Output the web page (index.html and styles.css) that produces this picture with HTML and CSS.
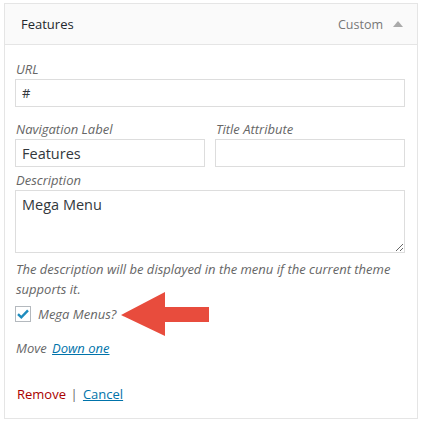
FILE: index.html
```html
<!DOCTYPE html>
<html lang="en">
<head>
    <meta charset="UTF-8">
    <meta name="viewport" content="width=device-width, initial-scale=1.0">
    <title>Menu Item</title>
    <link rel="stylesheet" href="styles.css">
</head>
<body>
    <div class="menu-item">
        <div class="item-bar">
            <span class="item-title">Features</span>
            <span class="item-controls">
                <span class="item-type">Custom</span>
                <span class="item-toggle"></span>
            </span>
        </div>
        <div class="item-settings">
            <div class="field url-field">
                <label class="field-label" for="urlInput">URL</label>
                <input class="field-input" type="text" id="urlInput" value="#">
            </div>
            <div class="field-row">
                <div class="field">
                    <label class="field-label" for="navLabel">Navigation Label</label>
                    <input class="field-input big" type="text" id="navLabel" value="Features">
                </div>
                <div class="field">
                    <label class="field-label" for="titleAttr">Title Attribute</label>
                    <input class="field-input" type="text" id="titleAttr">
                </div>
            </div>
            <div class="field desc-field">
                <label class="field-label" for="descInput">Description</label>
                <textarea class="field-input big" id="descInput">Mega Menu</textarea>
            </div>
            <p class="hint">The description will be displayed in the menu if the current theme supports it.</p>
            <div class="check-row">
                <span class="checkbox">
                    <svg width="12" height="10" viewBox="0 0 12 10"><path d="M1 5.2 L4.3 8.3 L11 1.3" fill="none" stroke="#1e8cbe" stroke-width="2.4"/></svg>
                </span>
                <span class="check-label">Mega Menus?</span>
                <svg class="pointer" width="88" height="44" viewBox="0 0 88 44"><polygon points="0,23 44,0 44,15 88,15 88,30 44,30 44,44" fill="#e84c3d"/></svg>
            </div>
            <p class="move">Move <a href="#">Down one</a></p>
            <div class="actions">
                <a class="remove" href="#">Remove</a>
                <span class="sep">|</span>
                <a class="cancel" href="#">Cancel</a>
            </div>
        </div>
    </div>
</body>
</html>
```

FILE: styles.css
```css
body{
    margin: 0;
    padding: 3px 5px 0 4px;
    background: #fff;
    font-family: "Open Sans", "Liberation Sans", sans-serif;
    font-size: 13px;
    color: #444;
}

.menu-item{
    border: 1px solid #e5e5e5;
    background: #fff;
}

.item-bar{
    display: flex;
    justify-content: space-between;
    align-items: center;
    height: 40px;
    padding: 0 14px 0 16px;
    background: #fafafa;
    border-bottom: 1px solid #e5e5e5;
}

.item-title{
    color: #23282d;
    font-size: 13px;
}

.item-controls{
    display: flex;
    align-items: center;
}

.item-type{
    color: #777;
    font-size: 12.5px;
}

.item-toggle{
    width: 0;
    height: 0;
    margin-left: 10px;
    border-left: 5px solid transparent;
    border-right: 5px solid transparent;
    border-bottom: 6px solid #aaa;
}

.item-settings{
    padding: 14px 12px 14px 10px;
}

.field{
    display: flex;
    flex-direction: column;
    min-width: 0;
}

.field-label{
    font-style: italic;
    color: #666;
    line-height: 20px;
    padding-left: 1px;
}

.field-input{
    box-sizing: border-box;
    width: 100%;
    height: 28px;
    border: 1px solid #ddd;
    padding: 0 6px;
    font-family: "Open Sans", "Liberation Sans", sans-serif;
    font-size: 13px;
    color: #32373c;
    outline: none;
}

.field-input.big{
    font-size: 14.5px;
}

.field-row{
    display: grid;
    grid-template-columns: minmax(0, 1fr) minmax(0, 1fr);
    gap: 10px;
    margin-top: 12px;
}

.desc-field{
    margin-top: 3px;
}

.desc-field textarea{
    height: 63px;
    padding: 4px 6px;
    resize: vertical;
}

.hint{
    margin: 6px 0 0;
    font-style: italic;
    color: #666;
    line-height: 20px;
    padding-left: 1px;
}

.check-row{
    display: flex;
    align-items: center;
    height: 20px;
    margin-top: 5px;
}

.checkbox{
    box-sizing: border-box;
    width: 16px;
    height: 16px;
    border: 1px solid #b4b9be;
    display: flex;
    align-items: center;
    justify-content: center;
}

.check-label{
    margin-left: 7px;
    font-style: italic;
    color: #666;
}

.pointer{
    margin: -11px 0 -11px 5px;
}

.move{
    margin: 14px 0 0;
    line-height: 20px;
    font-style: italic;
    color: #666;
    padding-left: 1px;
}

.move a{
    color: #0073aa;
    margin-left: 2px;
}

.actions{
    margin-top: 26px;
    line-height: 20px;
    padding-left: 2px;
}

.actions a{
    text-decoration: none;
}

.remove{
    color: #a00;
}

.sep{
    color: #666;
    margin: 0 2px 0 1px;
}

.cancel{
    color: #0073aa;
    text-decoration: underline !important;
}
```
